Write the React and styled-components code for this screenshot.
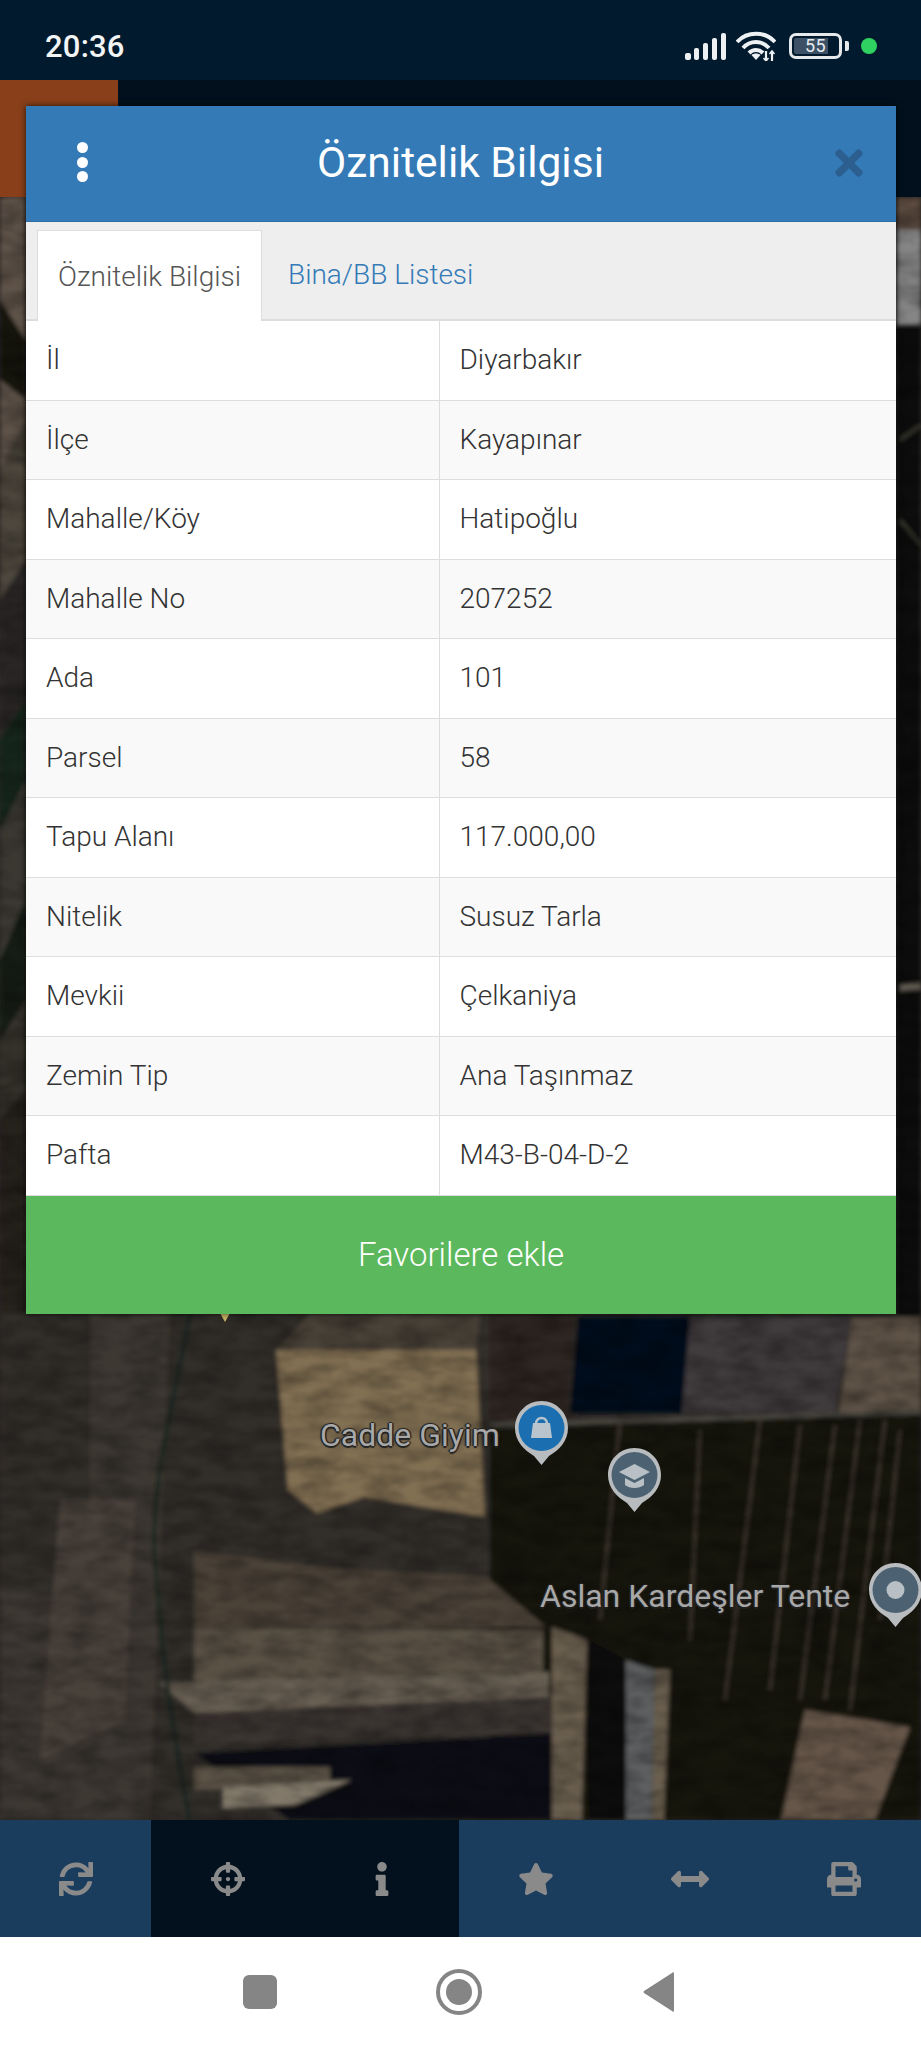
import React from 'react';
import styled, { createGlobalStyle } from 'styled-components';
import {
  FaSync, FaCrosshairs, FaInfo, FaStar, FaArrowsAltH, FaPrint, FaTimes,
} from 'react-icons/fa';

const GlobalStyle = createGlobalStyle`
  html, body { margin: 0; padding: 0; background: #fff; }
  body { font-family: Roboto, "Liberation Sans", sans-serif; }
  * { box-sizing: border-box; }
`;

const Screen = styled.div`
  width: 921px;
  height: 2048px;
  display: flex;
  flex-direction: column;
  overflow: hidden;
`;

const StatusBar = styled.div`
  height: 80px;
  flex: none;
  background: #011a2d;
  display: flex;
  align-items: center;
  justify-content: space-between;
  padding: 12px 0 0 45px;
`;

const Clock = styled.span`
  color: #f2f4f5;
  font-size: 31px;
  font-weight: 500;
  letter-spacing: 0.2px;
`;

const StatusIcons = styled.div`
  display: flex;
  align-items: center;
  margin-right: 44px;
  gap: 10px;
`;

const Battery = styled.div`
  position: relative;
  width: 53px;
  height: 26px;
  border: 3px solid #e6e9ec;
  border-radius: 7px;
  padding: 2px;
  display: flex;
  margin-left: 3px;
`;

const BatteryFill = styled.div`
  width: 34px;
  background: #3c5166;
  border-radius: 2px 0 0 2px;
`;

const BatteryText = styled.span`
  position: absolute;
  left: 0;
  top: 0;
  bottom: 0;
  width: 47px;
  text-align: center;
  line-height: 20px;
  color: #e8ecef;
  font-size: 18px;
  letter-spacing: 0.3px;
`;

const BatteryNub = styled.div`
  width: 4px;
  height: 10px;
  background: #e6e9ec;
  border-radius: 0 2px 2px 0;
  margin-left: -7px;
`;

const Dot = styled.div`
  width: 16px;
  height: 16px;
  border-radius: 50%;
  background: #2fd160;
  margin-left: 2px;
`;

const MapArea = styled.div`
  position: relative;
  flex: none;
  height: 1740px;
  overflow: hidden;
  background: #2f2b28;
`;

const MapImage = styled.svg`
  display: block;
  width: 921px;
  height: 1740px;
`;

const MapLabel = styled.span`
  position: absolute;
  left: ${(p) => p.$x}px;
  top: ${(p) => p.$y}px;
  font-size: ${(p) => p.$size}px;
  font-weight: 400;
  line-height: 1;
  white-space: nowrap;
  color: #a8a8a8;
  text-shadow: -1.5px 0 1px #222, 1.5px 0 1px #222, 0 -1.5px 1px #222, 0 1.5px 1px #222;
`;

const Pin = styled.svg`
  position: absolute;
  left: ${(p) => p.$x}px;
  top: ${(p) => p.$y}px;
`;

const Modal = styled.div`
  position: absolute;
  top: 26px;
  left: 26px;
  width: 870px;
  background: #fff;
  box-shadow: 0 0 6px rgba(0, 0, 0, 0.7);
`;

const ModalHeader = styled.div`
  height: 116px;
  background: #337ab7;
  display: flex;
  align-items: center;
  justify-content: center;
  position: relative;
  border-bottom: 1px solid #2e6da4;
`;

const ModalTitle = styled.h1`
  margin: 0;
  color: #fff;
  font-size: 42.5px;
  font-weight: 400;
  line-height: 1;
  margin-top: -1px;
  margin-right: 1px;
`;

const MenuDots = styled.div`
  position: absolute;
  left: 51px;
  top: 36px;
  display: flex;
  flex-direction: column;
  gap: 3.5px;
`;

const MenuDot = styled.span`
  width: 11px;
  height: 11px;
  border-radius: 50%;
  background: #fff;
`;

const CloseButton = styled.div`
  position: absolute;
  right: 27px;
  top: 37px;
  display: flex;
  color: #2c5f8f;
  font-size: 40px;
`;

const TabBar = styled.div`
  height: 99px;
  background: #eee;
  display: flex;
  align-items: flex-end;
  padding-left: 11px;
  border-bottom: 2px solid #ddd;
`;

const Tab = styled.div`
  height: ${(p) => (p.$active ? '91px' : '90px')};
  display: flex;
  align-items: center;
  padding: 0 ${(p) => (p.$active ? '20px' : '26px')};
  font-size: 28px;
  font-weight: 300;
  color: ${(p) => (p.$active ? '#555' : '#337ab7')};
  background: ${(p) => (p.$active ? '#fff' : 'transparent')};
  border: ${(p) => (p.$active ? '1px solid #ddd' : 'none')};
  border-bottom: none;
  margin-bottom: ${(p) => (p.$active ? '-2px' : '0')};
`;

const Row = styled.div`
  height: 79.5px;
  display: grid;
  grid-template-columns: 412.5px 1fr;
  background: ${(p) => (p.$even ? '#f9f9f9' : '#fff')};
  border-bottom: 1px solid #ddd;
`;

const Cell = styled.div`
  display: flex;
  align-items: center;
  padding-left: 20px;
  padding-bottom: 1px;
  font-size: 28px;
  font-weight: 300;
  color: #333;
  & + & { border-left: 1px solid #ddd; }
`;

const SaveButton = styled.div`
  height: 118px;
  background: #5cb85c;
  color: #fff;
  font-size: 33px;
  font-weight: 300;
  display: flex;
  align-items: center;
  justify-content: center;
`;

const Toolbar = styled.div`
  height: 117px;
  flex: none;
  display: grid;
  grid-template-columns: 151px repeat(5, 1fr);
  background: #1a3d5e;
`;

const ToolButton = styled.div`
  display: flex;
  align-items: center;
  justify-content: center;
  color: #8a8a8a;
  font-size: ${(p) => p.$size || 34}px;
  background: ${(p) => (p.$active ? '#02111d' : 'transparent')};
`;

const NavBar = styled.div`
  flex: none;
  height: 111px;
  background: #fff;
  display: flex;
  align-items: center;
  justify-content: center;
  padding-right: 3px;
`;

const NavSlot = styled.div`
  width: 199px;
  display: flex;
  justify-content: center;
  color: #858585;
  margin-top: -1px;
`;

const rows = [
  ['İl', 'Diyarbakır'],
  ['İlçe', 'Kayapınar'],
  ['Mahalle/Köy', 'Hatipoğlu'],
  ['Mahalle No', '207252'],
  ['Ada', '101'],
  ['Parsel', '58'],
  ['Tapu Alanı', '117.000,00'],
  ['Nitelik', 'Susuz Tarla'],
  ['Mevkii', 'Çelkaniya'],
  ['Zemin Tip', 'Ana Taşınmaz'],
  ['Pafta', 'M43-B-04-D-2'],
];

// satellite picture, coordinates are page pixels
const fields = [
  ['0,197 26,197 26,420 0,470', '#5f5348'],
  ['0,300 26,340 26,400 0,380', '#141210'],
  ['0,470 26,420 26,560 0,600', '#4d463c'],
  ['0,600 26,560 26,700 0,740', '#2a2825'],
  ['0,740 26,700 26,780 0,830', '#17251f'],
  ['0,830 26,780 26,900 0,960', '#3a3830'],
  ['0,960 26,900 26,1000 0,1040', '#121c19'],
  ['0,1040 26,1000 26,1090 0,1120', '#35322c'],
  ['0,1120 26,1090 26,1320 0,1320', '#26221f'],
  ['896,197 921,197 921,230 896,230', '#5b4b3f'],
  ['896,230 921,230 921,324 896,324', '#858585'],
  ['896,324 921,324 921,1320 896,1320', '#0b0b0b'],
  ['0,1313 190,1313 170,1820 0,1820', '#3c3732'],
  ['0,1313 90,1313 90,1600 0,1590', '#332f2b'],
  ['60,1500 135,1500 125,1720 40,1760', '#48423b'],
  ['170,1313 580,1313 560,1820 150,1820', '#332e29'],
  ['310,1313 480,1313 476,1350 276,1350', '#4a4239'],
  ['276,1350 476,1350 485,1517 364,1497 317,1513 288,1490', '#826f52'],
  ['490,1313 578,1313 570,1540 490,1540', '#2d2722'],
  ['578,1317 690,1317 682,1413 570,1413', '#06101a'],
  ['690,1317 852,1317 835,1413 682,1413', '#3f3b3d'],
  ['852,1317 921,1317 921,1413 838,1417', '#5e5346'],
  ['490,1425 921,1413 921,1820 490,1820', '#16120f'],
  ['194,1550 317,1567 487,1577 546,1627 194,1627', '#4c4338'],
  ['194,1628 543,1630 543,1683 194,1683', '#5a5145'],
  ['160,1683 549,1672 549,1697 194,1713', '#675e52'],
  ['194,1713 552,1697 555,1733 194,1745', '#3a3530'],
  ['194,1753 558,1733 558,1820 290,1820', '#0c0e12'],
  ['194,1767 330,1767 330,1783 194,1790', '#5c5347'],
  ['223,1787 352,1780 295,1805 223,1808', '#82796b'],
  ['552,1627 587,1640 582,1820 552,1820', '#6b5f4f'],
  ['587,1640 626,1660 626,1820 590,1820', '#07080a'],
  ['626,1660 655,1670 652,1820 626,1820', '#5d5f60'],
  ['655,1670 670,1670 664,1820 652,1820', '#6a5f4f'],
  ['805,1710 910,1727 875,1820 781,1820', '#66574a'],
];

const stripes = [
  [620, 1420, 600, 1620], [700, 1430, 690, 1640], [760, 1420, 725, 1700],
  [800, 1425, 770, 1690], [835, 1425, 800, 1700], [860, 1420, 825, 1700],
  [885, 1420, 850, 1710], [900, 1430, 880, 1620],
];

function MapPicture() {
  return (
    <MapImage viewBox="0 80 921 1740" preserveAspectRatio="none">
      <defs>
        <filter id="soft" x="-5%" y="-5%" width="110%" height="110%">
          <feGaussianBlur stdDeviation="2.2" />
        </filter>
        <filter id="grain">
          <feTurbulence type="fractalNoise" baseFrequency="0.03 0.07" numOctaves="3" seed="4" />
          <feColorMatrix values="0 0 0 0 0  0 0 0 0 0  0 0 0 0 0  0 0 0 1.4 -0.45" />
          <feGaussianBlur stdDeviation="1" />
        </filter>
      </defs>
      <g filter="url(#soft)">
        {fields.map(([points, fill]) => (
          <polygon key={points} points={points} fill={fill} />
        ))}
        {stripes.map(([x1, y1, x2, y2]) => (
          <line key={x1} x1={x1} y1={y1} x2={x2} y2={y2} stroke="#453c32" strokeWidth="2.500" />
        ))}
        <line x1="490" y1="1425" x2="921" y2="1412" stroke="#4a4640" strokeWidth="5" />
        <path d="M190 1313 C175 1400 150 1480 155 1560 S170 1720 190 1820" fill="none" stroke="#1d2a24" strokeWidth="4" />
        <line x1="900" y1="988" x2="921" y2="986" stroke="#6c665c" strokeWidth="6" />
        <path d="M900 440 L921 425 M900 520 L921 545" stroke="#3a3a30" strokeWidth="3" />
      </g>
      <rect x="0" y="197" width="921" height="1623" filter="url(#grain)" opacity="0.4" />
      <rect x="0" y="80" width="921" height="117" fill="#01101c" />
      <rect x="0" y="80" width="118" height="117" fill="#893f19" />
      <polygon points="220,1313 230,1313 225,1322" fill="#c9b765" />
    </MapImage>
  );
}

function MapPin({ x, y, w = 55, h = 66, color, children }) {
  return (
    <Pin $x={x} $y={y} width={w} height={h} viewBox="0 0 55 66">
      <path d="M27.5 1C12.5 1 1 13 1 28c0 13 9 22 19 28l7.500 9 7.500-9c10-6 19-15 19-28C54 13 42.500 1 27.500 1z" fill="#b9bcbf" />
      <circle cx="27.5" cy="28" r="23" fill={color} />
      {children}
    </Pin>
  );
}

function SignalIcon() {
  return (
    <svg width="41" height="27" viewBox="0 0 41 27" fill="#eef1f3">
      <rect x="0" y="20" width="6" height="7" rx="2" />
      <rect x="9" y="15" width="5" height="12" rx="2" />
      <rect x="18" y="10" width="5" height="17" rx="2" />
      <rect x="27" y="5" width="5" height="22" rx="2" />
      <rect x="36" y="0" width="5" height="27" rx="2" />
    </svg>
  );
}

function WifiIcon() {
  return (
    <svg width="40" height="30" viewBox="0 0 40 30" fill="none" stroke="#eef1f3" strokeWidth="4">
      <path d="M1 11 C11 0 29 0 39 11" />
      <path d="M7 17 C14 9 26 9 33 17" />
      <path d="M13 22 C17 18 23 18 27 22" />
      <path d="M15.500 24 L20 29 L24.500 24 C22 22 18 22 15.500 24z" fill="#eef1f3" stroke="none" />
      <path d="M30 20 V30 M36 20 V30" strokeWidth="2.200" />
      <path d="M27.500 27 L30 30 L32.500 27 M33.500 23 L36 20 L38.500 23" strokeWidth="1.500" />
    </svg>
  );
}

function App() {
  return (
    <Screen>
      <GlobalStyle />
      <StatusBar>
        <Clock>20:36</Clock>
        <StatusIcons>
          <SignalIcon />
          <WifiIcon />
          <Battery>
            <BatteryFill />
            <BatteryText>55</BatteryText>
          </Battery>
          <BatteryNub />
          <Dot />
        </StatusIcons>
      </StatusBar>
      <MapArea>
        <MapPicture />
        <MapLabel $x={320} $y={1339} $size={32}>Cadde Giyim</MapLabel>
        <MapPin x={514} y={1320} color="#1b6fb0">
          <path d="M19 23h17l2 15H17z" fill="#b9c4cc" />
          <path d="M22 24c0-8 11-8 11 0" fill="none" stroke="#b9c4cc" strokeWidth="2.500" />
        </MapPin>
        <MapPin x={607} y={1367} color="#4c6272">
          <path d="M27.500 17L43 25l-15.500 8L12 25z" fill="#b9c0c5" />
          <path d="M18 31v7c5 4 14 4 19 0v-7l-9.500 5z" fill="#b9c0c5" />
        </MapPin>
        <MapLabel $x={540} $y={1500} $size={32}>Aslan Kardeşler Tente</MapLabel>
        <MapPin x={868} y={1482} color="#4c6272">
          <circle cx="27.500" cy="28" r="9" fill="#b9c0c5" />
        </MapPin>
        <Modal>
          <ModalHeader>
            <MenuDots>
              <MenuDot />
              <MenuDot />
              <MenuDot />
            </MenuDots>
            <ModalTitle>Öznitelik Bilgisi</ModalTitle>
            <CloseButton><FaTimes /></CloseButton>
          </ModalHeader>
          <TabBar>
            <Tab $active>Öznitelik Bilgisi</Tab>
            <Tab>Bina/BB Listesi</Tab>
          </TabBar>
          {rows.map(([label, value], i) => (
            <Row key={label} $even={i % 2 === 1}>
              <Cell>{label}</Cell>
              <Cell>{value}</Cell>
            </Row>
          ))}
          <SaveButton>Favorilere ekle</SaveButton>
        </Modal>
      </MapArea>
      <Toolbar>
        <ToolButton><FaSync /></ToolButton>
        <ToolButton $active><FaCrosshairs /></ToolButton>
        <ToolButton $active><FaInfo /></ToolButton>
        <ToolButton $size={36}><FaStar /></ToolButton>
        <ToolButton $size={38}><FaArrowsAltH /></ToolButton>
        <ToolButton><FaPrint /></ToolButton>
      </Toolbar>
      <NavBar>
        <NavSlot>
          <svg width="34" height="34" viewBox="0 0 34 34"><rect width="34" height="34" rx="6" fill="currentColor" /></svg>
        </NavSlot>
        <NavSlot>
          <svg width="46" height="46" viewBox="0 0 46 46">
            <circle cx="23" cy="23" r="21" fill="none" stroke="currentColor" strokeWidth="4" />
            <circle cx="23" cy="23" r="13" fill="currentColor" />
          </svg>
        </NavSlot>
        <NavSlot>
          <svg width="32" height="40" viewBox="0 0 32 40"><path d="M30 1 L2 19 a1.500 1.500 0 0 0 0 2 L30 39 a1 1 0 0 0 2-1 V2 a1 1 0 0 0-2-1z" fill="currentColor" /></svg>
        </NavSlot>
      </NavBar>
    </Screen>
  );
}

export default App;
